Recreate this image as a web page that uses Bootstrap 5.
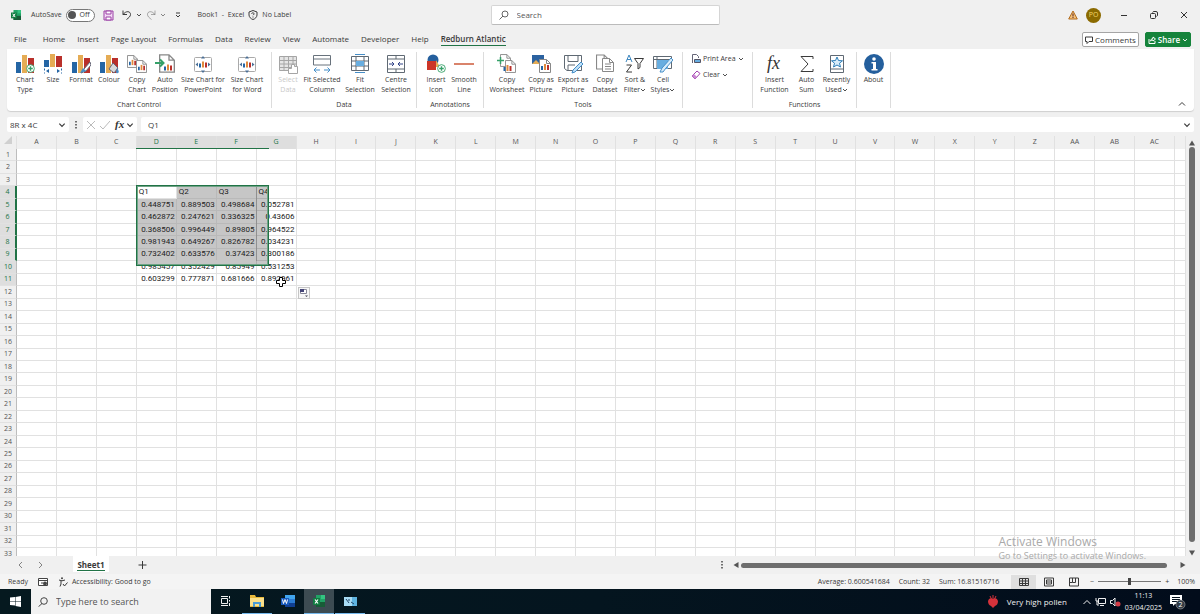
<!DOCTYPE html>
<html lang="en">
<head>
<meta charset="utf-8">
<meta name="viewport" content="width=device-width, initial-scale=1">
<title>Book1 - Excel</title>
<link href="https://cdn.jsdelivr.net/npm/bootstrap@5.3.0/dist/css/bootstrap.min.css" rel="stylesheet">
<style>
:root{--xl-green:#217346;--line:#e1e1e1;--chrome:#f0f0f0}
body{font-family:"Open Sans","Noto Sans",sans-serif;font-size:7px;line-height:10px;color:#3a3a3a;background:var(--chrome);height:100vh;overflow:hidden}
body>*{flex:none}
main{min-height:0}
button,input{font:inherit;color:inherit}
button{background:none;border:0;padding:0}
svg{display:block;flex:none}
a{color:inherit;text-decoration:none}
.i10{width:10px;height:10px}
.i6{width:6px;height:6px}
.ln{fill:none;stroke:currentColor}
.titlebar{height:30px;padding:0 1px 0 11px}
.titlebar .side{flex:1 1 0}
.autolabel{margin:0 4px 0 10px}
.autosave{border:1px solid #777;border-radius:7px;height:13px;width:29px;padding:0 4px 0 1px;background:#fff}
.autosave input{appearance:none;width:8px;height:8px;border-radius:50%;background:#555;margin:0}
.findbox{width:229px;height:20px;background:#fff;border:1px solid #d5d5d5;border-bottom-color:#bbb;border-radius:2px;padding:0 7px;font-size:8px;color:#666}
.findbox input,.fbox input,.task-search input{border:0;background:none;outline:0;padding:0;min-width:0}
.avatar{width:15px;height:15px;border-radius:50%;background:#8b6a00;color:#f3d667}
.win{width:30px;height:30px;color:#333}
.tabs{height:19px;padding:0 9px 0 14px;font-size:8px}
.tabs nav{gap:12px}
.tabs nav a{line-height:12px;border-bottom:1px solid transparent}
.tabs nav a.active{font-weight:600;border-bottom-color:var(--xl-green)}
.pills{gap:6px}
.pill{height:15px;border-radius:2px;border:1px solid #a5a5a5;background:#fff;padding:0 2px;gap:2px;font-size:8px}
.pill.share{background:#15833b;border-color:#15833b;color:#fff;font-weight:600}
.ribbon{height:62px;margin:0 6px 0 7px;background:#fff;border-radius:0 0 4px 4px;box-shadow:0 1px 1px #cfcfcf}
.rgroup{border-right:1px solid #dcdcdc;margin:3px 0;padding-top:2px}
.rgroup .items{height:46px}
.rgroup button{line-height:10px;white-space:nowrap}
.rgroup .big{display:flex;flex-direction:column;align-items:center;gap:1px}
.big>svg{width:20px;height:20px}
.big span svg{display:inline-block;vertical-align:middle}
.big:disabled{color:#b5b5b5;opacity:.75}
.w28{width:28px}.w32{width:32px}.w36{width:36px}.w40{width:40px}.w48{width:48px}
.g1{width:265px}.g2{width:145px}.g3{width:67px}.g4{width:199px}.g5{width:70px}.g6{width:104px}.g7{width:34px}
.g5{display:flex;flex-direction:column;gap:6px}
.g5 button{display:flex;align-items:center;gap:2px}
.fbar{height:15px;margin:6px 6px 4px 7px;font-size:8px}
.fbox{background:#fff;border-radius:2px;height:15px;padding:0 3px}
.namebox{width:62px}
.fxbox{width:54px}
.sheet{display:grid;grid-template-columns:17px repeat(29,minmax(0,1fr)) 11px;grid-template-rows:13px repeat(32,minmax(0,1fr)) 8px;height:100%;width:100%;margin:0;background:#fff}
.sheet thead,.sheet tbody,.sheet tr{display:contents}
.sheet th,.sheet td{display:flex;align-items:center;min-height:0;min-width:0;overflow:hidden;border-right:1px solid var(--line);border-bottom:1px solid var(--line);padding:0 2px;font-size:8px;line-height:12px;color:#222;white-space:nowrap}
.sheet td{font-family:Roboto,"Open Sans",sans-serif}
.sheet td.num{justify-content:flex-end;padding:0 1px}
.sheet th{background:var(--chrome);justify-content:center;font-weight:400;font-size:7px;color:#555;padding:0}
.sheet thead th{border-bottom-color:#bdbdbd}
.sheet tbody th{border-right-color:#bdbdbd}
.sheet th.sel{background:#dedede;color:var(--xl-green)}
.sheet tbody th.edge{border-right:2px solid var(--xl-green)}
.sheet tr:last-child>*{align-items:flex-start;border-bottom:0}
.sheet thead tr>*{align-items:center;border-bottom:1px solid #bdbdbd}
.sheet td.pick{background:#c6c6c6;border-color:#b9b9b9}
.over{position:absolute;pointer-events:none}
.range{left:136px;top:49px;width:133px;height:81px;border:1px solid var(--xl-green);box-shadow:inset 0 0 0 1px #6fa386}
.range::before{content:"";position:absolute;right:1px;top:1px;bottom:1px;width:11px;background:rgba(0,0,0,.22)}
.range::after{content:"";position:absolute;left:1px;right:12px;bottom:1px;height:4px;background:#c6c6c6}
.headline{left:136px;top:12px;width:133px;height:1px;background:var(--xl-green)}
.quick{left:298px;top:151px;width:12px;height:12px;background:#f7f7f7;border:1px solid #c6c6c6}
.cross{left:276px;top:141px}
.collapse-btn{position:absolute;right:8px;bottom:4px}
.vbar{width:14px;padding-left:3px}
.thumb{background:#6e6e6e;border-radius:3px}
.vbar .thumb{width:6px;margin:1px 0 8px}
.water{right:54px;bottom:52px;z-index:5;color:#a9a9a9;font-size:9px;line-height:13px}
.water strong{display:block;font-weight:400;font-size:12px;line-height:15px}
.sheetbar{height:18px;padding:0 14px 0 17px}
.sheettab{background:#fff;width:36px;height:16px;font-weight:700;font-size:8px}
.sheettab span{border-bottom:1px solid var(--xl-green);line-height:11px}
.hbar{width:453px}
.hbar .thumb{height:5px;margin:0 13px 0 2px}
.statusbar{height:15px;background:#f4f4f4;padding:0 5px 0 8px}
.sums{gap:9px}
.viewbtn{width:25px;height:14px}
.viewbtn.on{background:#dfdfdf}
.zoomr{appearance:none;width:63px;height:8px;background:linear-gradient(#777,#777) center/100% 1px no-repeat;margin:0 4px}
.zoomr::-webkit-slider-thumb{appearance:none;width:3px;height:7px;background:#444}
.taskbar{height:25px;background:linear-gradient(90deg,#05191f,#04151f 50%,#020c1b);color:#f0f0f0}
.start{width:31px}
.task-search{width:180px;background:#f2f2f2;color:#444;font-size:9px;padding:0 7px;gap:8px}
.task-search input::placeholder,.findbox input::placeholder{color:#555;opacity:1}
.apps{gap:1px}
.app{width:30px;height:25px;border-bottom:1px solid transparent}
.app.run{border-bottom-color:#76b9ed}
.app.live{background:#3c4b52}
.tray{gap:4px;padding-right:14px}
.weather{font-size:8px}
.clock{line-height:12px}
</style>
</head>
<body class="d-flex flex-column">

<svg width="0" height="0" class="position-absolute" aria-hidden="true">
  <defs>
    <symbol id="down" viewBox="0 0 6 6"><path class="ln" stroke-width=".9" d="M1 2l2 2 2-2"/></symbol>
    <symbol id="bars" viewBox="0 0 20 20"><path fill="#2465a4" d="M1 8h5v11H1z"/><path fill="#e5ac55" d="M7 1h5v18H7z"/><path fill="#b9302b" d="M13 4h6v15h-6z"/></symbol>
    <symbol id="mini" viewBox="0 0 8 8"><path fill="#2465a4" d="M0 3h2v4H0z"/><path fill="#e08a3c" d="M3 1h2v6H3z"/><path fill="#b9302b" d="M6 2h2v5H6z"/></symbol>
    <symbol id="page" viewBox="0 0 12 14"><path fill="#fff" stroke="#888" d="M.5.5h7l4 4v9H.5zM7.500.5v4h4"/></symbol>
    <symbol id="plus" viewBox="0 0 10 10"><circle cx="5" cy="5" r="4.300" fill="#fff" stroke="#35a169"/><path stroke="#35a169" stroke-width="1.500" d="M5 2.500v5M2.500 5h5"/></symbol>
    <symbol id="fitchart" viewBox="0 0 20 20"><rect x="1.500" y="3.500" width="17" height="14" rx="1" fill="#fff" stroke="#aaa"/><use href="#mini" x="6" y="6" width="8" height="9"/><path fill="#4a6f96" d="M10 2l2 2.500H8zM10 19l2-2.500H8zM2.500 10.500l2.500-2v4zM17.500 10.500l-2.500-2v4z"/></symbol>
    <symbol id="excel" viewBox="0 0 12 12"><path fill="#21a366" d="M3 0h9v12H3z"/><path fill="#33c481" d="M8 0h4v4H8z"/><path fill="#185c37" d="M3 7h9v5H3z"/><path fill="#107c41" d="M0 3h7v7H0z"/><path stroke="#fff" stroke-width="1.200" d="M2 4.500l3 4M5 4.500l-3 4"/></symbol>
  </defs>
</svg>

<header class="titlebar d-flex align-items-center">
  <div class="side d-flex align-items-center">
    <svg class="i10"><use href="#excel"/></svg>
    <label for="autosave" class="autolabel">AutoSave</label>
    <label class="autosave d-flex align-items-center justify-content-between"><input type="checkbox" id="autosave">Off</label>
    <button class="ms-2" aria-label="Save"><svg width="11" height="11" viewBox="0 0 11 11"><path fill="#f3d9f5" stroke="#9a3fa5" d="M1 1h9v9H1z"/><path fill="#fff" stroke="#9a3fa5" d="M3 1h5v3H3zM3 7h5v3H3z"/></svg></button>
    <button class="d-flex align-items-center gap-1 ms-2" aria-label="Undo"><svg width="10" height="10" viewBox="0 0 10 10"><path class="ln" d="M1 .5v4h4M1 4.500C4 .5 8.500 1 8.500 4.500c0 2-2 3.500-4 5"/></svg><svg class="i6"><use href="#down"/></svg></button>
    <button class="d-flex align-items-center gap-1 ms-1 text-black-50" aria-label="Redo"><svg width="10" height="10" viewBox="0 0 10 10"><path class="ln" stroke-opacity=".6" d="M9 .5v4H5M9 4.500C6 .5 1.500 1 1.500 4.500c0 2 2 3.500 4 5"/></svg><svg class="i6"><use href="#down"/></svg></button>
    <button class="ms-2" aria-label="Customise toolbar"><svg width="8" height="8" viewBox="0 0 8 8"><path class="ln" d="M2 2h4M2 4l2 2 2-2"/></svg></button>
    <span class="ms-3">Book1&nbsp; -&nbsp; Excel</span>
    <svg class="i10 ms-1 me-1" viewBox="0 0 10 10"><path class="ln" d="M5 .5l4 1.500v3c0 2-2 4-4 4.500C3 9 1 7 1 5V2z"/><path class="ln" d="M3.500 3.800C4 2.300 6.500 2.600 6 4.200L5 5.200M5 6.500v1"/></svg>
    <span>No Label</span>
  </div>
  <label class="findbox d-flex align-items-center gap-2"><svg class="i10" viewBox="0 0 10 10"><circle class="ln" cx="6" cy="4" r="3"/><path class="ln" d="M4 6L.5 9.500"/></svg><input type="search" class="flex-grow-1" placeholder="Search" aria-label="Search"></label>
  <div class="side d-flex align-items-center justify-content-end">
    <svg class="i10 me-2" viewBox="0 0 10 10"><path fill="#f5c27a" stroke="#b06a1c" d="M5 1l4.300 8H.7z"/><path stroke="#522" d="M5 3.500v3M5 7v1"/></svg>
    <span class="avatar d-flex align-items-center justify-content-center">PO</span>
    <button class="win ms-2" aria-label="Minimise"><svg class="i10 m-auto" viewBox="0 0 10 10"><path class="ln" d="M2 5.500h6"/></svg></button>
    <button class="win" aria-label="Restore"><svg class="i10 m-auto" viewBox="0 0 10 10"><rect class="ln" x="1.500" y="3.500" width="5" height="5" rx="1"/><path class="ln" d="M3.500 2.500Q4 1.500 5 1.500h2Q8.500 1.500 8.500 3v2q0 1-1 1.500"/></svg></button>
    <button class="win" aria-label="Close"><svg class="i10 m-auto" viewBox="0 0 10 10"><path class="ln" d="M2 2l6 6M8 2L2 8"/></svg></button>
  </div>
</header>

<div class="tabs d-flex align-items-center justify-content-between">
  <nav class="d-flex" aria-label="Ribbon tabs">
    <a href="#" class="me-1">File</a><a href="#">Home</a><a href="#">Insert</a><a href="#">Page Layout</a><a href="#">Formulas</a><a href="#">Data</a><a href="#">Review</a><a href="#">View</a><a href="#">Automate</a><a href="#">Developer</a><a href="#">Help</a><a href="#" class="active">Redburn Atlantic</a>
  </nav>
  <div class="pills d-flex">
    <button class="pill d-flex align-items-center"><svg width="8" height="8" viewBox="0 0 8 8"><path class="ln" d="M.5 1h7v4.500H4L2 7.500v-2H.5z"/></svg>Comments</button>
    <button class="pill share d-flex align-items-center"><svg width="8" height="8" viewBox="0 0 8 8"><path class="ln" d="M1 3v4.500h6V5M2.500 5Q3 2.500 5 2.500V1l2.500 2L5 5V4Q3.500 4 2.500 5"/></svg>Share<svg class="i6"><use href="#down"/></svg></button>
  </div>
</div>

<section class="ribbon d-flex position-relative" aria-label="Ribbon">
  <div class="rgroup g1 text-center"><div class="items d-flex justify-content-center">
    <button class="big w28"><svg viewBox="0 0 20 20"><use href="#bars"/><use href="#plus" x="11" y="10" width="9" height="9"/></svg><span>Chart<br>Type</span></button>
    <button class="big w28"><svg viewBox="0 0 20 20"><use href="#bars" y="-2"/><path fill="#fff" d="M0 13h20v7H0z"/><path stroke="#2465a4" stroke-dasharray="2 2" d="M1.500 14.500v5M18.500 14.500v5"/><path fill="#2465a4" d="M3 17l3-2v4zM17 17l-3-2v4z"/></svg><span>Size</span></button>
    <button class="big w28"><svg viewBox="0 0 20 20"><use href="#bars"/><path fill="#fff" stroke="#667" d="M19 8l-6 7-3 4 5-2 5-6z"/><path fill="#458ec8" d="M9 19l3-5 3 3z"/></svg><span>Format</span></button>
    <button class="big w28"><svg viewBox="0 0 20 20"><use href="#bars"/><path fill="#d9d9d9" stroke="#667" d="M14 9l5 5-4 5-5-4z"/><path fill="#458ec8" d="M18 14q3 4 1 5t-2-1z"/></svg><span>Colour</span></button>
    <button class="big w28"><svg viewBox="0 0 20 20"><use href="#page" x="0" y="1" width="11" height="13"/><use href="#mini" x="2" y="5" width="7" height="7"/><use href="#page" x="9" y="6" width="11" height="13"/><use href="#mini" x="11" y="10" width="7" height="7"/></svg><span>Copy<br>Chart</span></button>
    <button class="big w28"><svg viewBox="0 0 20 20"><use href="#page" x="4" y="0" width="16" height="19"/><use href="#mini" x="9" y="9" width="8" height="9"/><path fill="none" stroke="#35a169" stroke-width="2" d="M0 9h8M5 5.500L8.500 9 5 12.500"/></svg><span>Auto<br>Position</span></button>
    <button class="big w48"><svg viewBox="0 0 20 20"><use href="#fitchart"/></svg><span>Size Chart for<br>PowerPoint</span></button>
    <button class="big w40"><svg viewBox="0 0 20 20"><use href="#fitchart"/></svg><span>Size Chart<br>for Word</span></button>
  </div>Chart Control</div>
  <div class="rgroup g2 text-center"><div class="items d-flex justify-content-center">
    <button class="big w28" disabled><svg viewBox="0 0 20 20"><path fill="#ddd" stroke="#888" d="M1.500 2.500h17v14h-17zM1.500 6.500h17M1.500 10h17M1.500 13.500h17M6 2v14M10.500 2v14M15 2v14"/><path fill="#fff" stroke="#888" d="M10.500 19.500v-5h3v-4h3v2h3v7z"/></svg><span>Select<br>Data</span></button>
    <button class="big w40"><svg viewBox="0 0 20 20"><path fill="#fff" stroke="#68727c" d="M1.500 11V1.500h17V11M1.500 5h17M1.500 11h17"/><path fill="none" stroke="#458ec8" d="M2 16h6M12 16h6M4.500 13.500L2 16l2.500 2.500M15.500 13.500L18 16l-2.500 2.500"/></svg><span>Fit Selected<br>Column</span></button>
    <button class="big w36"><svg viewBox="0 0 20 20"><path fill="#fff" stroke="#5f6973" d="M1.500 2.500h17v14h-17zM1.500 7h17M1.500 12h17M6 2.500v14M14 2.500v14"/><path fill="#67ade0" d="M6 7h8v5H6z"/><path stroke="#458ec8" d="M5 .5h10M5 18.500h10"/></svg><span>Fit<br>Selection</span></button>
    <button class="big w36"><svg viewBox="0 0 20 20"><path fill="#fff" stroke="#5f6973" d="M1.500 1.500h17v17h-17zM1.500 5h17M1.500 15h17M10 1.500V5M10 15v3.500"/><path fill="none" stroke="#348" d="M3 10h5M6 8l2 2-2 2M17 10h-5M14 8l-2 2 2 2"/></svg><span>Centre<br>Selection</span></button>
  </div>Data</div>
  <div class="rgroup g3 text-center"><div class="items d-flex justify-content-center">
    <button class="big w28"><svg viewBox="0 0 20 20"><circle cx="7" cy="6" r="5.500" fill="#245f9d"/><path fill="#cc3527" d="M1 7h9v9H1z"/><path fill="#e5ac55" d="M10 6l4 7h-4z"/><use href="#plus" x="11" y="10" width="9" height="9"/></svg><span>Insert<br>Icon</span></button>
    <button class="big w28"><svg viewBox="0 0 20 20"><path stroke="#cc5a3a" stroke-width="1.500" d="M0 10h20"/></svg><span>Smooth<br>Line</span></button>
  </div>Annotations</div>
  <div class="rgroup g4 text-center"><div class="items d-flex justify-content-center">
    <button class="big w36"><svg viewBox="0 0 20 20"><use href="#page" x="3" y="0" width="11" height="13"/><use href="#page" x="8" y="6" width="11" height="13"/><use href="#mini" x="6" y="10" width="9" height="8"/><path stroke="#35a169" stroke-width="1.500" d="M3.500 3v7M0 6.500h7"/></svg><span>Copy<br>Worksheet</span></button>
    <button class="big w32"><svg viewBox="0 0 20 20"><path fill="#2b62a0" d="M1 1h12v9H1z"/><path fill="#e5ac55" d="M1 10l4-4 4 4z"/><use href="#page" x="8" y="5" width="12" height="14"/><use href="#mini" x="10" y="9" width="8" height="8"/></svg><span>Copy as<br>Picture</span></button>
    <button class="big w32"><svg viewBox="0 0 20 20"><path fill="#fff" stroke="#5f6973" d="M1.500 1.500h17v15H4l-2.500-2zM5 1.500v6h10v-6M5 16v-5h7"/><path fill="#bfe0f7" stroke="#458ec8" d="M18 8l2 2-8 8-3 1 1-3z"/></svg><span>Export as<br>Picture</span></button>
    <button class="big w32"><svg viewBox="0 0 20 20"><use href="#page" x="1" y="0" width="13" height="16"/><use href="#page" x="7" y="3" width="12" height="16"/><path stroke="#888" d="M10 10h6M10 12.500h6M10 15h6"/></svg><span>Copy<br>Dataset</span></button>
    <button class="big w28"><svg viewBox="0 0 20 20"><path fill="none" stroke="#3d87bf" d="M1 8l3-7 3 7M2 5.500h4"/><path class="ln" d="M1.500 11h5l-5 7h5.500M9.500 4.500h9l-3.500 5v4l-2 1.500v-5.500z"/></svg><span>Sort &amp;<br>Filter<svg class="i6"><use href="#down"/></svg></span></button>
    <button class="big w28"><svg viewBox="0 0 20 20"><path fill="#fff" stroke="#5f6973" d="M.5 2.500h18v12H.5zM.5 5.500h18M4 2.500v12"/><path fill="#67ade0" d="M4 6h11v9H4z"/><path fill="#d7ecfa" stroke="#458ec8" d="M18 4l2 2-7 8-3 4H7l2-4z"/></svg><span>Cell<br>Styles<svg class="i6"><use href="#down"/></svg></span></button>
  </div>Tools</div>
  <div class="rgroup g5 ps-2">
    <button><svg class="i10" viewBox="0 0 10 10"><path fill="#fff" stroke="#667" d="M1.500 9V.5h4l2 2V4"/><path fill="#67ade0" stroke="#556" d="M3.500 5.500h6v3h-6z"/></svg>Print Area<svg class="i6"><use href="#down"/></svg></button>
    <button><svg class="i10" viewBox="0 0 10 10"><path fill="#fff" stroke="#a13fae" d="M1 6l5-5 3 2.500-5 5.500z"/><path fill="#c987d2" d="M1 6l2-2 3 3-2 2z"/></svg>Clear<svg class="i6"><use href="#down"/></svg></button>
  </div>
  <div class="rgroup g6 text-center"><div class="items d-flex justify-content-center">
    <button class="big w36"><svg viewBox="0 0 20 20"><text x="2" y="15" font-family="Liberation Serif, serif" font-style="italic" font-size="18" fill="#333">fx</text></svg><span>Insert<br>Function</span></button>
    <button class="big w28"><svg viewBox="0 0 20 20"><path class="ln" d="M16 5V2.500H4L11 10l-7 7.500h12V15"/></svg><span>Auto<br>Sum</span></button>
    <button class="big w32"><svg viewBox="0 0 20 20"><path fill="#fff" stroke="#5f6973" d="M3.500 1.500h13v17h-13zM3.500 15h13"/><path fill="#d7ecfa" stroke="#2f7fb8" d="M10 3l1.500 3.500 4 .3-3 2.400 1 3.800-3.500-2-3.500 2 1-3.800-3-2.400 4-.3z"/></svg><span>Recently<br>Used<svg class="i6"><use href="#down"/></svg></span></button>
  </div>Functions</div>
  <div class="rgroup g7 text-center"><div class="items d-flex justify-content-center">
    <button class="big w32"><svg viewBox="0 0 20 20"><circle cx="10" cy="10" r="10" fill="#245f9d"/><circle cx="10" cy="5" r="1.800" fill="#fff"/><path fill="#fff" d="M7.500 8H12v7h1.500v1.500h-6V15H9V9.500H7.500z"/></svg><span>About</span></button>
  </div></div>
  <button class="collapse-btn" aria-label="Collapse ribbon"><svg width="8" height="6" viewBox="0 0 8 6"><path class="ln" d="M1 4.500l3-3 3 3"/></svg></button>
</section>

<div class="fbar d-flex align-items-center">
  <label class="fbox namebox d-flex align-items-center"><input class="flex-grow-1 w-100" value="8R x 4C" aria-label="Name box"><svg width="8" height="8" viewBox="0 0 6 6"><use href="#down"/></svg></label>
  <svg class="mx-1" width="6" height="10" viewBox="0 0 6 10"><path stroke="#444" stroke-width="1.500" stroke-dasharray="1.500 1.500" d="M3 1v8"/></svg>
  <div class="fbox fxbox d-flex align-items-center me-1">
    <svg class="i10" viewBox="0 0 10 10"><path stroke="#bbb" d="M1 1l8 8M9 1L1 9"/></svg>
    <svg class="i10 ms-1" viewBox="0 0 10 10"><path fill="none" stroke="#bbb" d="M0 6l3 3 7-8"/></svg>
    <svg class="ms-1" width="12" height="12" viewBox="0 0 12 12"><text x="1" y="9" font-family="Liberation Serif, serif" font-style="italic" font-weight="bold" font-size="11" fill="#333">fx</text></svg>
    <svg width="8" height="8" viewBox="0 0 6 6"><use href="#down"/></svg>
  </div>
  <label class="fbox d-flex align-items-center flex-grow-1"><input class="flex-grow-1 ms-1" value="Q1" aria-label="Formula"><svg width="8" height="8" viewBox="0 0 6 6"><use href="#down"/></svg></label>
</div>

<main class="d-flex flex-fill">
  <div class="position-relative flex-grow-1">
    <table class="sheet" aria-label="Sheet1"><thead><tr id="cols"></tr></thead><tbody id="rows"></tbody></table>
    <div class="over headline"></div>
    <div class="over range"></div>
    <div class="over quick"><svg width="10" height="10" viewBox="0 0 10 10"><path fill="#fff" stroke="#889" d="M1.500 1.500h6v4h-6z"/><path fill="#447" d="M1 1h4v3H1z"/><path fill="#445" d="M6 7.500h3l-1.500 1.500z"/></svg></div>
    <svg class="over cross" width="10" height="10" viewBox="0 0 10 10"><path fill="#fff" stroke="#000" d="M3.500.5h3v3h3v3h-3v3h-3v-3h-3v-3h3z"/></svg>
  </div>
  <div class="vbar d-flex flex-column">
    <svg class="i6 mt-1" viewBox="0 0 6 6"><path fill="#555" d="M0 5.500L3 .5l3 5z"/></svg>
    <div class="thumb flex-grow-1"></div>
    <svg class="i6" viewBox="0 0 6 6"><path fill="#555" d="M0 .5h6l-3 5z"/></svg>
  </div>
</main>

<div class="sheetbar d-flex align-items-center">
  <svg width="8" height="8" viewBox="0 0 8 8"><path class="ln" stroke-opacity=".6" d="M5 1L2 4l3 3"/></svg>
  <svg class="ms-2 me-1" width="12" height="8" viewBox="0 0 12 8"><path class="ln" stroke-opacity=".6" d="M6 1l3 3-3 3"/></svg>
  <button class="sheettab ms-4 align-self-start"><span>Sheet1</span></button>
  <button class="ms-4" aria-label="New sheet"><svg width="14" height="8" viewBox="0 0 14 8"><path class="ln" d="M9.500 0v8M5.500 4h8"/></svg></button>
  <svg class="ms-auto me-2" width="6" height="10" viewBox="0 0 6 10"><path stroke="#444" stroke-width="1.500" stroke-dasharray="1.500 1.500" d="M3 1v8"/></svg>
  <div class="hbar d-flex align-items-center">
    <svg class="i6" viewBox="0 0 6 6"><path fill="#555" d="M5.500 0v6L.5 3z"/></svg>
    <div class="thumb flex-grow-1"></div>
    <svg class="i6" viewBox="0 0 6 6"><path fill="#555" d="M.5 0v6l5-3z"/></svg>
  </div>
</div>

<footer class="statusbar d-flex align-items-center">
  <span>Ready</span>
  <svg class="ms-2" width="14" height="10" viewBox="0 0 10 10"><path fill="#fff" stroke="#444" d="M.5 1.500h9v7h-9zM.5 3.500h9M3 6h2"/><circle cx="7" cy="6.500" r="2" fill="#444"/></svg>
  <svg class="ms-2 me-1" width="10" height="10" viewBox="0 0 10 10"><circle cx="4" cy="1.300" r="1" fill="#444"/><path class="ln" d="M1 3l3 .8L7 3M3 4v3L2 9.500M5 7l1.500 2L9.500 5.500"/></svg>
  <span>Accessibility: Good to go</span>
  <div class="sums d-flex ms-auto me-2"><span>Average: 0.600541684</span><span>Count: 32</span><span>Sum: 16.81516716</span></div>
  <button class="viewbtn on ms-1" aria-label="Normal view"><svg class="m-auto i10" viewBox="0 0 10 10"><path class="ln" d="M.5 1.500h9v7h-9zM.5 4h9M.5 6.500h9M3.500 1v8M6.500 1v8"/></svg></button>
  <button class="viewbtn" aria-label="Page layout view"><svg class="m-auto i10" viewBox="0 0 10 10"><path class="ln" d="M.5 1h9v8h-9zM2.500 3h5v4h-5zM3 5h4"/></svg></button>
  <button class="viewbtn" aria-label="Page break view"><svg class="m-auto i10" viewBox="0 0 10 10"><path class="ln" d="M.5 1h9v8h-9zM3.500 1v4.500h3V1M.5 5.500h3"/></svg></button>
  <span class="ms-1">−</span><input class="zoomr" type="range" min="10" max="190" value="100" aria-label="Zoom"><span>+</span>
  <span class="ms-2">100%</span>
</footer>

<div class="taskbar d-flex align-items-center">
  <button class="start" aria-label="Start"><svg class="m-auto" width="11" height="11" viewBox="0 0 11 11"><path fill="#fff" d="M0 1.500L5 1v4H0zM5.500 1L11 0v5H5.500zM0 5.500h5v4L0 9zM5.500 5.500H11V11l-5.500-1z"/></svg></button>
  <label class="task-search d-flex align-items-center align-self-stretch"><svg class="i10" viewBox="0 0 10 10"><circle class="ln" cx="6" cy="4" r="3.300"/><path class="ln" d="M4 6.500L.5 9.700"/></svg><input type="search" class="flex-grow-1" placeholder="Type here to search" aria-label="Search Windows"></label>
  <div class="apps d-flex">
    <button class="app" aria-label="Task view"><svg class="m-auto i10" viewBox="0 0 10 10"><path class="ln" d="M0 .5h7M.5 2.500h6v5h-6zM0 9.500h7M8.500 0v2.500M8.500 4v1.500M8.500 7v3"/></svg></button>
    <button class="app run" aria-label="File Explorer"><svg class="m-auto" width="14" height="12" viewBox="0 0 14 12"><path fill="#e8b93b" d="M0 0h5l1 2h8v10H0z"/><path fill="#fbe08a" d="M0 3h14v8H0z"/><path fill="#4a9bd4" d="M3 7h8v5H9V9H5v3H3z"/></svg></button>
    <button class="app" aria-label="Word"><svg class="m-auto" width="14" height="12" viewBox="0 0 14 12"><path fill="#41a5ee" d="M4 0h10v4H4z"/><path fill="#2b7cd3" d="M4 4h10v4H4z"/><path fill="#103f91" d="M4 8h10v4H4z"/><path fill="#185abd" d="M0 3h8v7H0z"/><path fill="none" stroke="#fff" d="M1.500 4.500l1 4 1.500-4 1.500 4 1-4"/></svg></button>
    <button class="app run live" aria-label="Excel"><svg class="m-auto" width="14" height="12"><use href="#excel"/></svg></button>
    <button class="app run" aria-label="Remote app"><svg class="m-auto" width="13" height="9" viewBox="0 0 13 9"><path fill="#a8dcf4" d="M0 0h13v9H0z"/><path fill="#5fb4e0" d="M8 0h5v9H8z"/><path stroke="#246" d="M2 2l3 4M5 2v2M7 5l3 2"/></svg></button>
  </div>
  <div class="tray d-flex align-items-center ms-auto">
    <svg width="12" height="13" viewBox="0 0 12 13"><path fill="#d5323b" d="M6 4q4-2 5 2 0 4-3 5l-2 2-2-2Q1 10 1 6q1-4 5-2z"/><path stroke="#d5323b" d="M6 4V0M4.500 4L3 1M7.500 4L9 1"/></svg>
    <span class="weather ms-1 me-2">Very high pollen</span>
    <svg class="ms-1" width="8" height="6" viewBox="0 0 8 6"><path class="ln" d="M.5 5L4 1.500 7.500 5"/></svg>
    <svg width="11" height="10" viewBox="0 0 11 10"><path class="ln" d="M3.500 1.500h7v5h-7zM5 8.500h4M1 1v3h2M2 4v4h2"/></svg>
    <svg width="11" height="10" viewBox="0 0 11 10"><path class="ln" d="M.5 3.500h2L5 1v8L2.500 6.500h-2z"/><circle cx="8" cy="7" r="2.500" fill="#d43b46"/></svg>
    <span class="clock text-center">11:13<br>03/04/2025</span>
    <svg class="ms-1" width="16" height="16" viewBox="0 0 16 16"><path fill="#fff" d="M0 1h12v9H5l-2 2v-2H0z"/><path stroke="#04101c" d="M2 3.500h8M2 5.500h8M2 7.500h5"/><circle cx="10.500" cy="10.500" r="4.500" fill="#333c46" stroke="#aaa" stroke-width=".6"/><text x="10.500" y="13" text-anchor="middle" font-size="7" fill="#fff">2</text></svg>
  </div>
</div>

<div class="over water"><strong>Activate Windows</strong>Go to Settings to activate Windows.</div>

<script src="https://cdn.jsdelivr.net/npm/bootstrap@5.3.0/dist/js/bootstrap.bundle.min.js"></script>
<script>
const data = {
  4: ["Q1", "Q2", "Q3", "Q4"],
  5: ["0.448751", "0.889503", "0.498684", "0.052781"],
  6: ["0.462872", "0.247621", "0.336325", "0.43606"],
  7: ["0.368506", "0.996449", "0.89805", "0.964522"],
  8: ["0.981943", "0.649267", "0.826782", "0.034231"],
  9: ["0.732402", "0.633576", "0.37423", "0.300186"],
  10: ["0.985457", "0.352429", "0.85949", "0.531253"],
  11: ["0.603299", "0.777871", "0.681666", "0.892961"]
};
const colName = i => i < 26 ? String.fromCharCode(65 + i) : "A" + String.fromCharCode(39 + i);
let head = '<th aria-label="Select all"><svg width="8" height="8" viewBox="0 0 8 8"><path fill="#d0d0d0" d="M8 0v8H0z"/></svg></th>';
for (let c = 0; c < 29; c++) head += `<th class="${c > 2 && c < 7 ? "sel" : ""}">${colName(c)}</th>`;
document.getElementById("cols").innerHTML = head + "<th></th>";
let body = "";
for (let r = 1; r <= 33; r++) {
  const cls = r > 3 && r < 12 ? (r < 10 ? "sel edge" : "sel") : "";
  body += `<tr><th class="${cls}">${r}</th>`;
  for (let c = 0; c < 30; c++) {
    const v = (data[r] && data[r][c - 3]) || "";
    const picked = r > 3 && r < 10 && c > 2 && c < 6 && !(r === 4 && c === 3);
    body += `<td class="${v && r > 4 ? "num " : ""}${picked ? "pick" : ""}">${v}</td>`;
  }
  body += "</tr>";
}
document.getElementById("rows").innerHTML = body;
</script>
</body>
</html>
